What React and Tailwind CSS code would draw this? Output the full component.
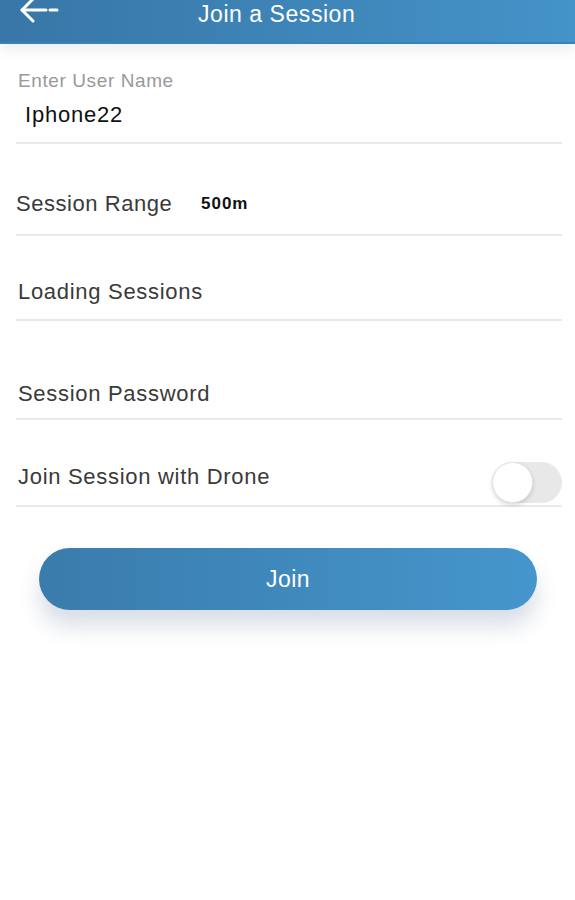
import { useState } from 'react';

const BackArrow = () => (
  <svg width="44" height="26" viewBox="0 0 44 26" fill="none" stroke="white" strokeWidth="3" strokeLinecap="round" strokeLinejoin="round">
    <path d="M14 1 L3 12 L14 23" />
    <path d="M3 12 H27" />
    <path d="M31 12 H38" />
  </svg>
);

const Row = ({ children, className = '' }) => (
  <div className={`flex items-end border-b-2 border-[#e9e9e9] ${className}`}>{children}</div>
);

const App = () => {
  const [drone, setDrone] = useState(false);

  return (
    <div className="min-h-[900px] bg-white font-['Liberation_Sans',Arial,sans-serif] text-[#333]">
      {/* header */}
      <div className="relative z-10 flex h-[44px] items-start border-b-2 border-[#3583b8] bg-gradient-to-r from-[#3876a7] to-[#4493c9] shadow-[0_6px_14px_rgba(0,0,0,0.07)]">
        <button className="ml-[19px] mt-[-2px]">
          <BackArrow />
        </button>
        <h1 className="ml-[135px] mt-[1px] text-[23px] leading-[27px] tracking-[0.55px] text-white">Join a Session</h1>
      </div>

      <div className="pl-[16px] pr-[13px]">
        {/* user name */}
        <Row className="h-[100px] flex-col items-start justify-end pb-[14px] pl-[2px]">
          <label className="text-[19px] leading-[22px] tracking-[0.6px] text-[#999]">Enter User Name</label>
          <div className="mt-[10px] pl-[7px] text-[22px] leading-[26px] tracking-[0.8px] text-[#111]">Iphone22</div>
        </Row>

        {/* range */}
        <Row className="h-[92px] pb-[17px]">
          <span className="w-[185px] text-[22px] leading-[26px] tracking-[0.55px] text-[#3a3a3a]">Session Range</span>
          <span className="mb-[2px] text-[17px] font-bold leading-[22px] tracking-[1px] text-[#111]">500m</span>
        </Row>

        {/* sessions */}
        <Row className="h-[85px] pb-[14px] pl-[2px]">
          <span className="text-[22px] leading-[26px] tracking-[0.7px] text-[#3a3a3a]">Loading Sessions</span>
        </Row>

        {/* password */}
        <Row className="h-[99px] pb-[11px] pl-[2px]">
          <span className="text-[22px] leading-[26px] tracking-[0.7px] text-[#3a3a3a]">Session Password</span>
        </Row>

        {/* drone */}
        <Row className="h-[87px] items-center justify-between pl-[2px]">
          <span className="mb-[13px] mt-auto self-end pb-[2px] text-[22px] leading-[26px] tracking-[0.7px] text-[#3a3a3a]">Join Session with Drone</span>
          <button
            onClick={() => setDrone(!drone)}
            className={`mb-[2px] flex h-[41px] w-[70px] self-end items-center rounded-full p-0 ${drone ? 'justify-end bg-[#4190c6]' : 'justify-start bg-[#e8e8e8]'}`}
          >
            <span className="h-[41px] w-[41px] rounded-full border border-[#e4e4e4] bg-white shadow-[0_2px_4px_rgba(0,0,0,0.15)]" />
          </button>
        </Row>
      </div>

      {/* join */}
      <div className="mt-[41px] flex pl-[39px] pr-[38px]">
        <button className="h-[62px] w-full rounded-full bg-gradient-to-r from-[#3a7cac] to-[#4596cd] text-[23px] tracking-[0.5px] text-white shadow-[0_16px_22px_rgba(60,90,130,0.2)]">
          Join
        </button>
      </div>
    </div>
  );
};

export default App;
